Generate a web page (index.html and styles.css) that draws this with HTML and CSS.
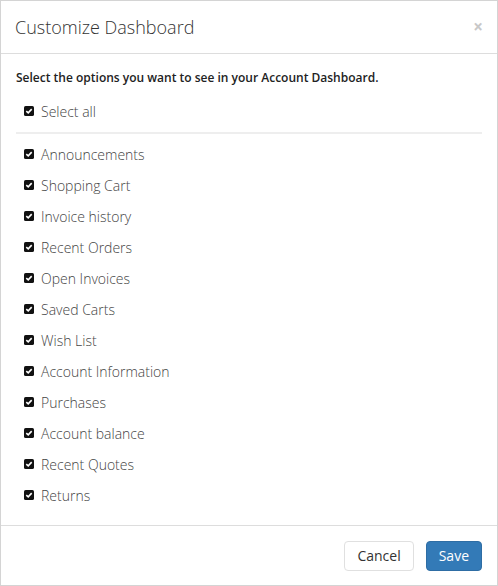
FILE: index.html
```html
<!DOCTYPE html>
<html>
<head>
<meta charset="utf-8">
<link rel="stylesheet" href="styles.css">
</head>
<body>
<div class="modal">
  <div class="modal-header">
    <h4 class="modal-title">Customize Dashboard</h4>
    <span class="close">×</span>
  </div>
  <div class="modal-body">
    <p class="intro">Select the options you want to see in your Account Dashboard.</p>
    <div class="opt"><span class="cb"><svg viewBox="0 0 10 10" width="10" height="10"><rect width="10" height="10" rx="1.6" fill="#111"/><path d="M2.3 5.1 L4.2 6.9 L7.7 3.1" stroke="#fff" stroke-width="1.6" fill="none"/></svg></span>Select all</div>
    <hr class="sep">
    <div class="list">
      <div class="opt"><span class="cb"><svg viewBox="0 0 10 10" width="10" height="10"><rect width="10" height="10" rx="1.6" fill="#111"/><path d="M2.3 5.1 L4.2 6.9 L7.7 3.1" stroke="#fff" stroke-width="1.6" fill="none"/></svg></span>Announcements</div>
      <div class="opt"><span class="cb"><svg viewBox="0 0 10 10" width="10" height="10"><rect width="10" height="10" rx="1.6" fill="#111"/><path d="M2.3 5.1 L4.2 6.9 L7.7 3.1" stroke="#fff" stroke-width="1.6" fill="none"/></svg></span>Shopping Cart</div>
      <div class="opt"><span class="cb"><svg viewBox="0 0 10 10" width="10" height="10"><rect width="10" height="10" rx="1.6" fill="#111"/><path d="M2.3 5.1 L4.2 6.9 L7.7 3.1" stroke="#fff" stroke-width="1.6" fill="none"/></svg></span>Invoice history</div>
      <div class="opt"><span class="cb"><svg viewBox="0 0 10 10" width="10" height="10"><rect width="10" height="10" rx="1.6" fill="#111"/><path d="M2.3 5.1 L4.2 6.9 L7.7 3.1" stroke="#fff" stroke-width="1.6" fill="none"/></svg></span>Recent Orders</div>
      <div class="opt"><span class="cb"><svg viewBox="0 0 10 10" width="10" height="10"><rect width="10" height="10" rx="1.6" fill="#111"/><path d="M2.3 5.1 L4.2 6.9 L7.7 3.1" stroke="#fff" stroke-width="1.6" fill="none"/></svg></span>Open Invoices</div>
      <div class="opt"><span class="cb"><svg viewBox="0 0 10 10" width="10" height="10"><rect width="10" height="10" rx="1.6" fill="#111"/><path d="M2.3 5.1 L4.2 6.9 L7.7 3.1" stroke="#fff" stroke-width="1.6" fill="none"/></svg></span>Saved Carts</div>
      <div class="opt"><span class="cb"><svg viewBox="0 0 10 10" width="10" height="10"><rect width="10" height="10" rx="1.6" fill="#111"/><path d="M2.3 5.1 L4.2 6.9 L7.7 3.1" stroke="#fff" stroke-width="1.6" fill="none"/></svg></span>Wish List</div>
      <div class="opt"><span class="cb"><svg viewBox="0 0 10 10" width="10" height="10"><rect width="10" height="10" rx="1.6" fill="#111"/><path d="M2.3 5.1 L4.2 6.9 L7.7 3.1" stroke="#fff" stroke-width="1.6" fill="none"/></svg></span>Account Information</div>
      <div class="opt"><span class="cb"><svg viewBox="0 0 10 10" width="10" height="10"><rect width="10" height="10" rx="1.6" fill="#111"/><path d="M2.3 5.1 L4.2 6.9 L7.7 3.1" stroke="#fff" stroke-width="1.6" fill="none"/></svg></span>Purchases</div>
      <div class="opt"><span class="cb"><svg viewBox="0 0 10 10" width="10" height="10"><rect width="10" height="10" rx="1.6" fill="#111"/><path d="M2.3 5.1 L4.2 6.9 L7.7 3.1" stroke="#fff" stroke-width="1.6" fill="none"/></svg></span>Account balance</div>
      <div class="opt"><span class="cb"><svg viewBox="0 0 10 10" width="10" height="10"><rect width="10" height="10" rx="1.6" fill="#111"/><path d="M2.3 5.1 L4.2 6.9 L7.7 3.1" stroke="#fff" stroke-width="1.6" fill="none"/></svg></span>Recent Quotes</div>
      <div class="opt"><span class="cb"><svg viewBox="0 0 10 10" width="10" height="10"><rect width="10" height="10" rx="1.6" fill="#111"/><path d="M2.3 5.1 L4.2 6.9 L7.7 3.1" stroke="#fff" stroke-width="1.6" fill="none"/></svg></span>Returns</div>
    </div>
  </div>
  <div class="modal-footer">
    <button class="btn btn-default">Cancel</button>
    <button class="btn btn-primary">Save</button>
  </div>
</div>
</body>
</html>
```

FILE: styles.css
```css
html, body {
  margin: 0;
  padding: 0;
  background: #fff;
}
body {
  font-family: "Open Sans", "Liberation Sans", sans-serif;
  color: #333;
}
.modal {
  box-sizing: border-box;
  width: 498px;
  height: 586px;
  border: 1px solid #d4d4d4;
  display: flex;
  flex-direction: column;
}
.modal-header {
  display: flex;
  align-items: center;
  justify-content: space-between;
  padding: 0 14px 0 14px;
  border-bottom: 1px solid #ddd;
  height: 53px;
  box-sizing: border-box;
  flex: none;
}
.modal-title {
  margin: 0;
  font-size: 18px;
  font-weight: 300;
  line-height: 22px;
  color: #333;
}
.close {
  font-size: 17px;
  font-weight: 700;
  color: #c8c8c8;
  line-height: 1;
  margin-top: -2px;
}
.modal-body {
  flex: 1;
  padding: 15px 15px 0 15px;
}
.intro {
  margin: 0 0 15px 0;
  font-size: 12px;
  font-weight: 600;
  line-height: 17px;
  color: #222;
}
.opt {
  display: flex;
  align-items: center;
  height: 20px;
  padding-left: 8px;
  font-size: 14px;
  font-weight: 300;
  color: #444;
}
.cb {
  display: flex;
  width: 10px;
  height: 10px;
  margin-right: 7px;
}
.sep {
  margin: 11px 0 10px 0;
  border: 0;
  border-top: 2px solid #eee;
}
.list {
  display: flex;
  flex-direction: column;
  gap: 11px;
}
.modal-footer {
  flex: none;
  display: flex;
  justify-content: flex-end;
  gap: 12px;
  padding: 15px 15px 14px;
  border-top: 1px solid #ddd;
}
.btn {
  font-family: "Open Sans", "Liberation Sans", sans-serif;
  font-size: 14px;
  line-height: 20px;
  padding: 4px 12px 4px;
  border-radius: 4px;
  border: 1px solid #ccc;
  background: #fff;
  color: #333;
}
.btn-default {
  border-color: #e0e0e0;
}
.btn-primary {
  background: #337ab7;
  border-color: #2e6da4;
  color: #fff;
}
```
